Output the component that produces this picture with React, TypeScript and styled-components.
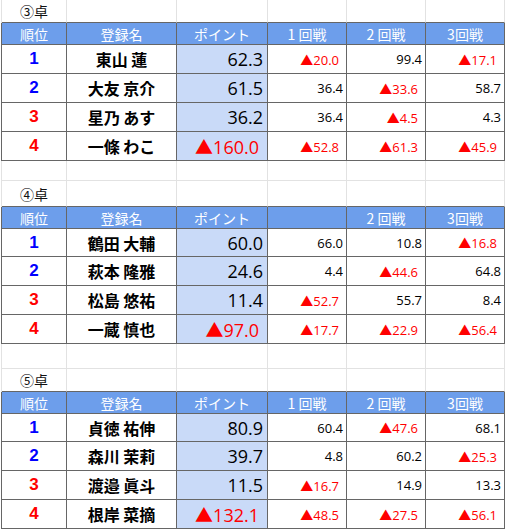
import styled, { createGlobalStyle } from "styled-components";

const GRID = "#e2e2e2";
const LINE = "#666666";
const HEAD_BG = "#6d9eeb";
const POINT_BG = "#c9daf8";
const RED = "#ff0000";
const BLUE = "#0000ff";

const JP = `"Noto Sans CJK JP", sans-serif`;
const NUM = `"Open Sans", "Noto Sans CJK JP", sans-serif`;

const GlobalStyle = createGlobalStyle`
  html, body {
    margin: 0;
    padding: 0;
    background: #fff;
  }
  body {
    width: 505px;
    height: 530px;
    overflow: hidden;
  }
`;

const Sheet = styled.div`
  display: flex;
  flex-direction: column;
  padding-left: 1px;
  width: 505px;
  box-sizing: border-box;
`;

const Row = styled.div<{ $h: number; $edge: string }>`
  display: grid;
  grid-template-columns: 65px 110px 91px 79px 79px 79px;
  width: 504px;
  height: ${({ $h }) => $h}px;
  box-sizing: border-box;
  border-left: 1px solid ${({ $edge }) => $edge};
`;

const Cell = styled.div`
  display: flex;
  align-items: center;
  box-sizing: border-box;
  overflow: hidden;
  white-space: nowrap;
  border-right: 1px solid ${LINE};
  border-bottom: 1px solid ${LINE};
`;

const BlankCell = styled(Cell)<{ $bottom: string }>`
  border-right-color: ${GRID};
  border-bottom-color: ${({ $bottom }) => $bottom};
  justify-content: center;
  font-family: ${JP};
  font-size: 14px;
  color: #111;
`;

const HeadCell = styled(Cell)`
  justify-content: center;
  background: ${HEAD_BG};
  color: #fff;
  font-family: ${JP};
  font-size: 14px;
`;

const RankCell = styled(Cell)<{ $top: boolean }>`
  justify-content: center;
  font-family: "Liberation Sans", Arial, sans-serif;
  font-weight: bold;
  font-size: 17px;
  color: ${({ $top }) => ($top ? BLUE : RED)};
`;

const NameCell = styled(Cell)`
  justify-content: center;
  font-family: ${JP};
  font-weight: bold;
  font-size: 16px;
  color: #000;
`;

const PointCell = styled(Cell)<{ $neg: boolean }>`
  justify-content: flex-end;
  background: ${POINT_BG};
  font-family: ${NUM};
  font-size: 18px;
  padding-right: ${({ $neg }) => ($neg ? 8 : 4)}px;
  color: ${({ $neg }) => ($neg ? RED : "#000")};
`;

const RoundCell = styled(Cell)<{ $neg: boolean }>`
  justify-content: flex-end;
  font-family: ${NUM};
  font-size: 13px;
  padding-right: ${({ $neg }) => ($neg ? 7 : 3)}px;
  color: ${({ $neg }) => ($neg ? RED : "#000")};
`;

type Player = { name: string; point: number; rounds: number[] };

type Table = {
  title: string;
  spacer: number;
  titleH: number;
  rowHs: number[];
  heads: string[];
  players: Player[];
};

const tables: Table[] = [
  {
    title: "③卓",
    spacer: 0,
    titleH: 23,
    rowHs: [29, 29, 29, 29],
    heads: ["1 回戦", "2 回戦", "3回戦"],
    players: [
      { name: "東山 蓮", point: 62.3, rounds: [-20.0, 99.4, -17.1] },
      { name: "大友 京介", point: 61.5, rounds: [36.4, -33.6, 58.7] },
      { name: "星乃 あす", point: 36.2, rounds: [36.4, -4.5, 4.3] },
      { name: "一條 わこ", point: -160.0, rounds: [-52.8, -61.3, -45.9] },
    ],
  },
  {
    title: "④卓",
    spacer: 20,
    titleH: 26,
    rowHs: [28, 29, 29, 29],
    heads: ["", "2 回戦", "3回戦"],
    players: [
      { name: "鶴田 大輔", point: 60.0, rounds: [66.0, 10.8, -16.8] },
      { name: "萩本 隆雅", point: 24.6, rounds: [4.4, -44.6, 64.8] },
      { name: "松島 悠祐", point: 11.4, rounds: [-52.7, 55.7, 8.4] },
      { name: "一蔵 慎也", point: -97.0, rounds: [-17.7, -22.9, -56.4] },
    ],
  },
  {
    title: "⑤卓",
    spacer: 25,
    titleH: 23,
    rowHs: [28, 29, 29, 29],
    heads: ["1 回戦", "2 回戦", "3回戦"],
    players: [
      { name: "貞徳 祐伸", point: 80.9, rounds: [60.4, -47.6, 68.1] },
      { name: "森川 茉莉", point: 39.7, rounds: [4.8, 60.2, -25.3] },
      { name: "渡邉 眞斗", point: 11.5, rounds: [-16.7, 14.9, 13.3] },
      { name: "根岸 菜摘", point: -132.1, rounds: [-48.5, -27.5, -56.1] },
    ],
  },
];

// negative scores are shown as a red ▲ value
const fmt = (v: number) => (v < 0 ? "▲" : "") + Math.abs(v).toFixed(1);

function BlankRow({ h, bottom, title }: { h: number; bottom: string; title?: string }) {
  return (
    <Row $h={h} $edge={GRID}>
      <BlankCell $bottom={bottom}>{title}</BlankCell>
      {[0, 1, 2, 3, 4].map((i) => (
        <BlankCell key={i} $bottom={bottom} />
      ))}
    </Row>
  );
}

function ScoreTable({ table }: { table: Table }) {
  return (
    <>
      {table.spacer > 0 && <BlankRow h={table.spacer} bottom={GRID} />}
      <BlankRow h={table.titleH} bottom={LINE} title={table.title} />
      <Row $h={22} $edge={LINE}>
        <HeadCell>順位</HeadCell>
        <HeadCell>登録名</HeadCell>
        <HeadCell>ポイント</HeadCell>
        {table.heads.map((h, i) => (
          <HeadCell key={i}>{h}</HeadCell>
        ))}
      </Row>
      {table.players.map((p, i) => (
        <Row key={p.name} $h={table.rowHs[i]} $edge={LINE}>
          <RankCell $top={i < 2}>{i + 1}</RankCell>
          <NameCell>{p.name}</NameCell>
          <PointCell $neg={p.point < 0}>{fmt(p.point)}</PointCell>
          {p.rounds.map((r, j) => (
            <RoundCell key={j} $neg={r < 0}>
              {fmt(r)}
            </RoundCell>
          ))}
        </Row>
      ))}
    </>
  );
}

export default function App() {
  return (
    <>
      <GlobalStyle />
      <Sheet>
        {tables.map((t) => (
          <ScoreTable key={t.title} table={t} />
        ))}
      </Sheet>
    </>
  );
}
